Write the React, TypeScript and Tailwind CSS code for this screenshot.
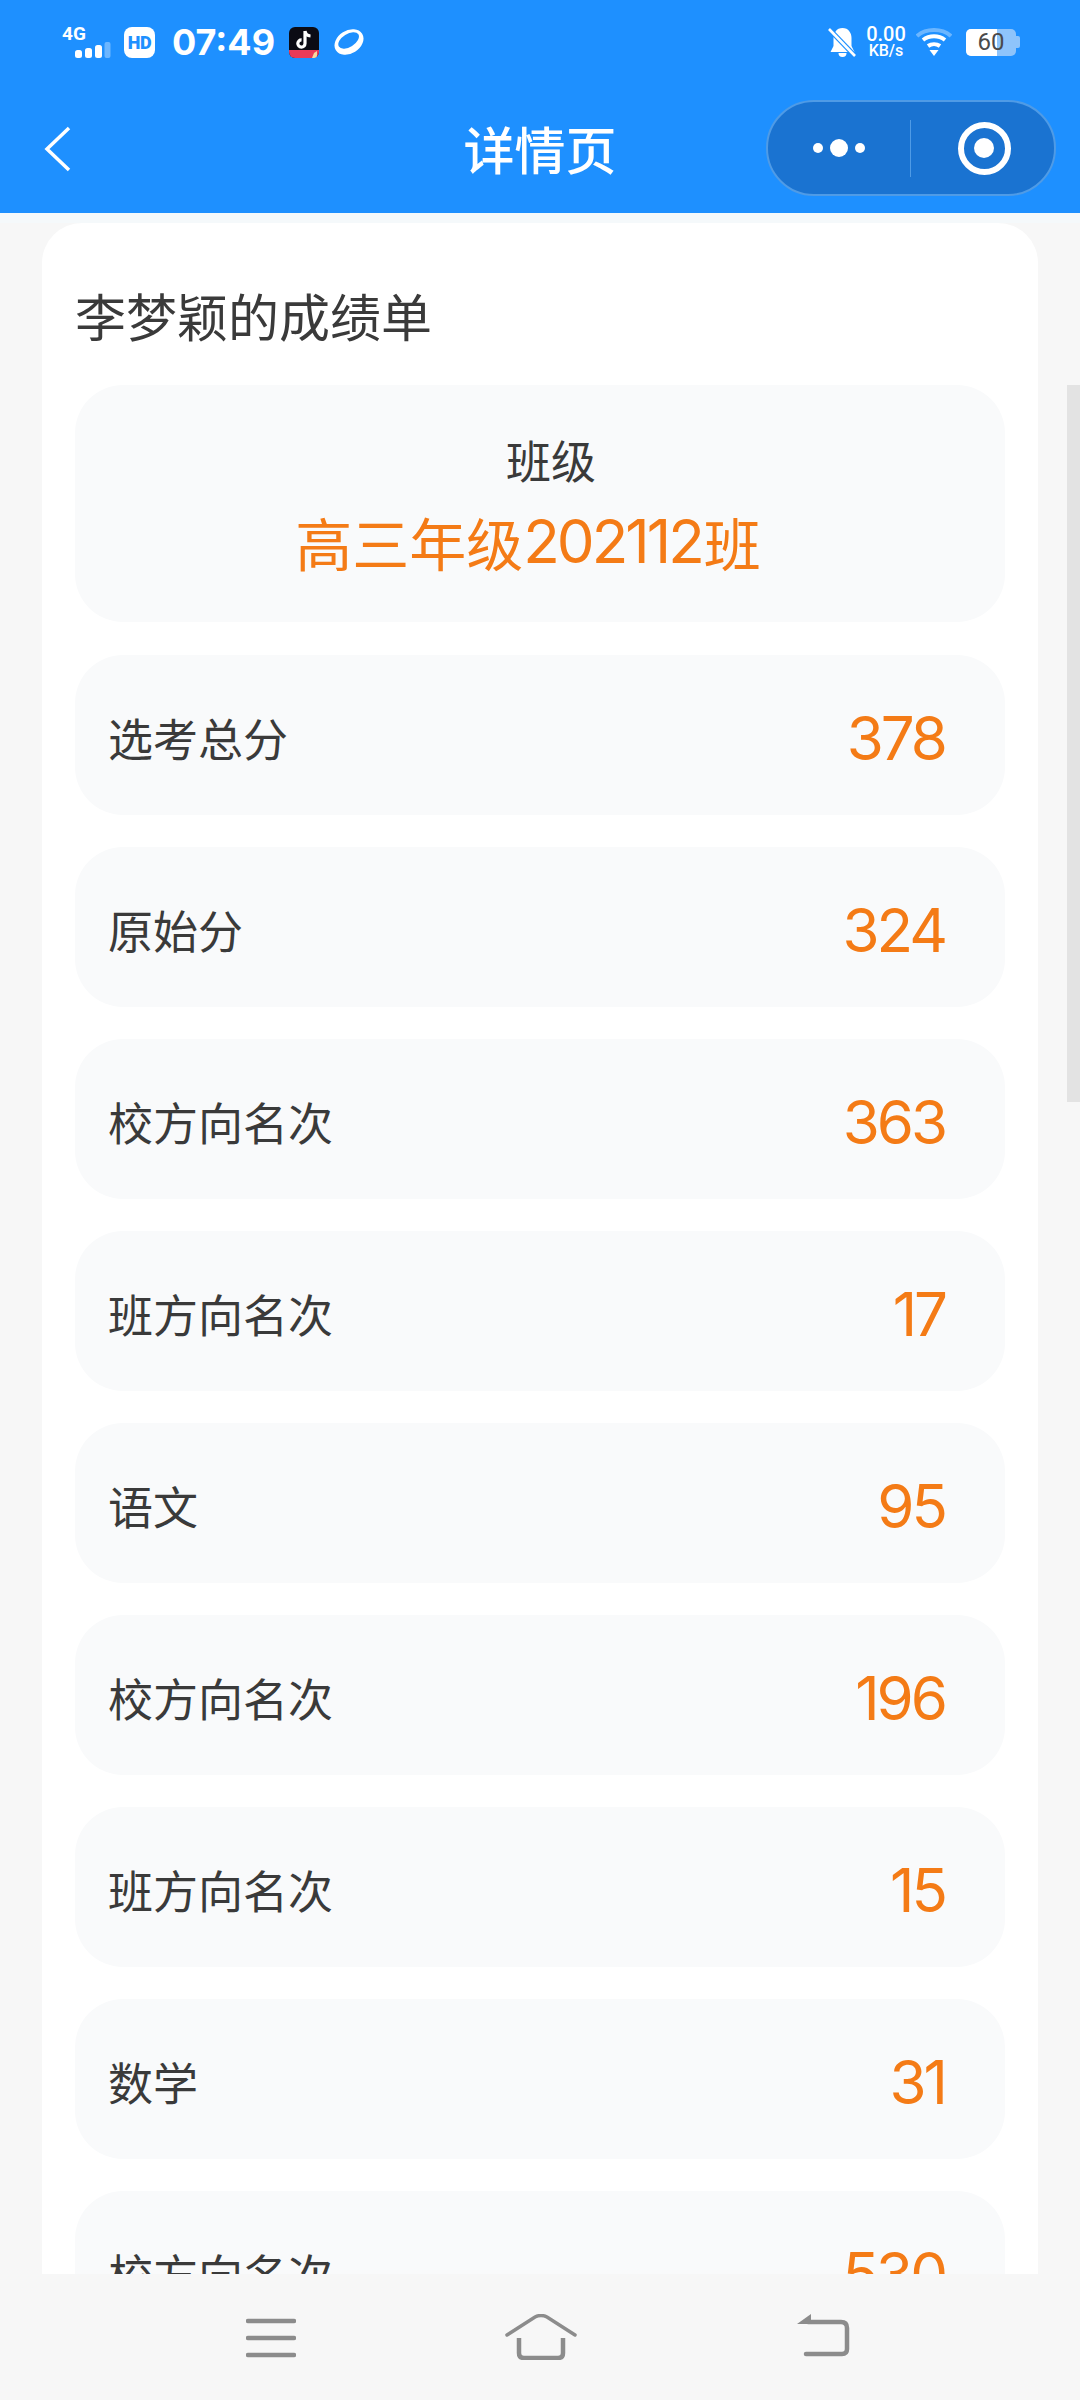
import React from 'react'

const rows = [
  { label: '选考总分', value: '378' },
  { label: '原始分', value: '324' },
  { label: '校方向名次', value: '363' },
  { label: '班方向名次', value: '17' },
  { label: '语文', value: '95' },
  { label: '校方向名次', value: '196' },
  { label: '班方向名次', value: '15' },
  { label: '数学', value: '31' },
  { label: '校方向名次', value: '530' },
]

const cjk = "font-['Noto_Sans_CJK_SC','Noto_Sans',sans-serif]"

function LeftStatus() {
  return (
    <div className="flex items-center">
      <div className="ml-[62px] flex w-[50px] flex-col">
        <span className="font-['Roboto',sans-serif] text-[19px] leading-[16px] font-bold text-white">4G</span>
        <svg width="36" height="16" viewBox="0 0 36 16" className="ml-[13px]">
          <rect x="0" y="8" width="7" height="8" rx="2.5" fill="#fff" />
          <rect x="10" y="6" width="7" height="10" rx="2.5" fill="#fff" />
          <rect x="20" y="3" width="7" height="13" rx="2.5" fill="#fff" />
          <rect x="29.5" y="0" width="6" height="16" rx="2" fill="#fff" fillOpacity="0.35" />
        </svg>
      </div>
      <div className="ml-[12px] flex h-[31px] w-[31px] items-center justify-center rounded-[8px] bg-white font-['Roboto',sans-serif] text-[18px] font-black tracking-[-0.5px] text-[#1e90ff]">
        HD
      </div>
      <span className="ml-[17px] font-['Inter',sans-serif] text-[36px] leading-[40px] font-bold text-white">07:49</span>
      <svg width="30" height="31" viewBox="0 0 30 31" className="ml-[14px]">
        <rect width="30" height="31" rx="6" fill="#0b0b14" />
        <path d="M0 23h30v2a6 6 0 0 1-6 6H6a6 6 0 0 1-6-6z" fill="#ea3a58" />
        <path d="M25 26l3-2v4a3 3 0 0 1-3 3h-2z" fill="#f7d9a0" />
        <path d="M16 4v12.5a3.6 3.6 0 1 1-3.4-3.6M16 4c.5 3 2.5 4.8 5.5 5" fill="none" stroke="#fff" strokeWidth="3.2" />
      </svg>
      <svg width="30" height="28" viewBox="0 0 30 28" className="ml-[15px]">
        <g transform="rotate(-32 15 14)">
          <ellipse cx="15" cy="14" rx="15.5" ry="11.5" fill="#fff" />
          <ellipse cx="15.5" cy="12.5" rx="11.5" ry="6.5" fill="#1e90ff" />
        </g>
      </svg>
    </div>
  )
}

function RightStatus() {
  return (
    <div className="mr-[60px] flex items-center">
      <svg width="29" height="31" viewBox="0 0 29 31">
        <path d="M14.5 1c6 0 9 5 9 10v8l3 6H2.500l3-6v-8c0-5 3-10 9-10z" fill="#fff" />
        <path d="M10.500 26h8a4 4 0 0 1-8 0z" fill="#fff" />
        <path d="M1 2l26 27" stroke="#1e90ff" strokeWidth="5" />
        <path d="M1 2l26 27" stroke="#fff" strokeWidth="2.6" />
      </svg>
      <div className="ml-[8px] flex w-[42px] flex-col items-center font-['Roboto',sans-serif] font-medium text-white">
        <span className="text-[20px] leading-[17px]">0.00</span>
        <span className="text-[16px] leading-[15px]">KB/s</span>
      </div>
      <svg width="36" height="28" viewBox="0 0 36 28" className="ml-[9px]">
        <path d="M1 8C10 0 26 0 35 8" fill="none" stroke="#fff" strokeOpacity="0.35" strokeWidth="4" />
        <path d="M7 12c6.500-5 15.500-5 22 0" fill="none" stroke="#fff" strokeWidth="4" />
        <path d="M12 18c3.500-2.500 8.500-2.500 12 0" fill="none" stroke="#fff" strokeWidth="4" />
        <path d="M13.500 22h9l-4.500 6z" fill="#fff" />
      </svg>
      <div className="ml-[14px] flex items-center">
        <div className="relative flex h-[27px] w-[50px] items-center justify-center overflow-hidden rounded-[5px] bg-[#8ec4fb]">
          <div className="absolute inset-y-0 left-0 w-[31px] bg-white" />
          <span className="relative font-['Roboto',sans-serif] text-[24px] leading-none text-[#4a4a4a]">60</span>
        </div>
        <div className="h-[12px] w-[4px] rounded-r-[2px] bg-[#8ec4fb]" />
      </div>
    </div>
  )
}

function Capsule() {
  return (
    <div className="flex h-[96px] w-[290px] items-center rounded-full border-2 border-[#4f9be6] bg-[#1a73d1]">
      <div className="flex flex-1 items-center justify-center gap-[7px]">
        <span className="h-[10px] w-[10px] rounded-full bg-white" />
        <span className="h-[18px] w-[18px] rounded-full bg-white" />
        <span className="h-[10px] w-[10px] rounded-full bg-white" />
      </div>
      <div className="h-[57px] w-[1px] bg-[#4f9be6]" />
      <div className="flex w-[143px] items-center justify-center pl-[3px]">
        <div className="flex h-[53px] w-[53px] items-center justify-center rounded-full border-[6px] border-white">
          <span className="h-[20px] w-[20px] rounded-full bg-white" />
        </div>
      </div>
    </div>
  )
}

function BottomBar() {
  return (
    <footer className="z-10 flex h-[126px] shrink-0 bg-[#f7f7f7] pt-[40px]">
      <div className="flex w-full items-start">
        <svg width="50" height="42" viewBox="0 0 50 42" className="ml-[246px] mt-[3px]">
          <path d="M2 4h46M2 21h46M2 38h46" stroke="#8c8c8c" strokeWidth="4.500" strokeLinecap="round" />
        </svg>
        <svg width="72" height="46" viewBox="0 0 72 46" className="ml-[209px]">
          <path d="M2 21L30 3q6-3 12 0l28 18" fill="none" stroke="#8c8c8c" strokeWidth="3.5" strokeLinecap="round" />
          <path d="M14 24v15q0 5 5 5h34q5 0 5-5V24" fill="none" stroke="#8c8c8c" strokeWidth="4.500" />
        </svg>
        <svg width="54" height="44" viewBox="0 0 54 44" className="ml-[219px]">
          <path d="M1 10L15 0v10z" fill="#8c8c8c" />
          <path d="M12 8h33q6 0 6 6v21q0 5-5 5H10" fill="none" stroke="#8c8c8c" strokeWidth="4.500" strokeLinecap="round" />
        </svg>
      </div>
    </footer>
  )
}

export default function App() {
  return (
    <div className={`${cjk} relative flex h-[2400px] w-[1080px] flex-col overflow-hidden bg-[#f7f7f7]`}>
      <header className="h-[213px] shrink-0 bg-[#1e90ff]">
        <div className="flex h-[80px] items-center justify-between pt-[4px]">
          <LeftStatus />
          <RightStatus />
        </div>
        <div className="relative mt-[20px] flex h-[96px] items-center justify-center">
          <svg width="28" height="46" viewBox="0 0 28 46" className="absolute left-[44px] top-[26px]">
            <path d="M25 2L3 23l22 21" fill="none" stroke="#fff" strokeWidth="3.5" />
          </svg>
          <span className="text-[51px] leading-[60px] font-medium text-white">详情页</span>
          <div className="absolute right-[24px] top-0">
            <Capsule />
          </div>
        </div>
      </header>

      <main className="min-h-0 flex-1 overflow-hidden border-t-[10px] border-[#f5f9fb] px-[42px]">
        <div className="rounded-t-[40px] bg-white px-[33px] pt-[62px]">
          <h1 className="text-[51px] leading-[60px] font-normal text-[#3a3a3a]">李梦颖的成绩单</h1>
          <section className="mt-[40px] flex h-[237px] flex-col items-center rounded-[48px] bg-[#f9fafb] pt-[50px]">
            <span className="pl-[22px] text-[45px] leading-[50px] text-[#3a3a3a]">班级</span>
            <span className="mt-[21px] flex h-[70px] items-center pr-[24px] text-[57px] leading-[70px] text-[#f47b16]">
              高三年级
              <span className="font-['Inter',sans-serif] text-[60px] font-normal tracking-[-3px]">202112</span>
              <span className="ml-[2px]">班</span>
            </span>
          </section>
          <div className="mt-[33px] flex flex-col gap-[32px]">
            {rows.map((r, i) => (
              <div key={i} className="flex h-[160px] shrink-0 items-center justify-between rounded-[48px] bg-[#f9fafb] pl-[33px] pr-[60px]">
                <span className="pt-[5px] text-[45px] leading-[50px] text-[#3a3a3a]">{r.label}</span>
                <span className="pt-[6px] font-['Inter',sans-serif] text-[60px] leading-[70px] font-normal tracking-[-3px] text-[#f47b16]">{r.value}</span>
              </div>
            ))}
          </div>
        </div>
      </main>

      <div className="absolute right-0 top-[385px] h-[717px] w-[13px] bg-[#e3e3e3]" />
      <BottomBar />
    </div>
  )
}
